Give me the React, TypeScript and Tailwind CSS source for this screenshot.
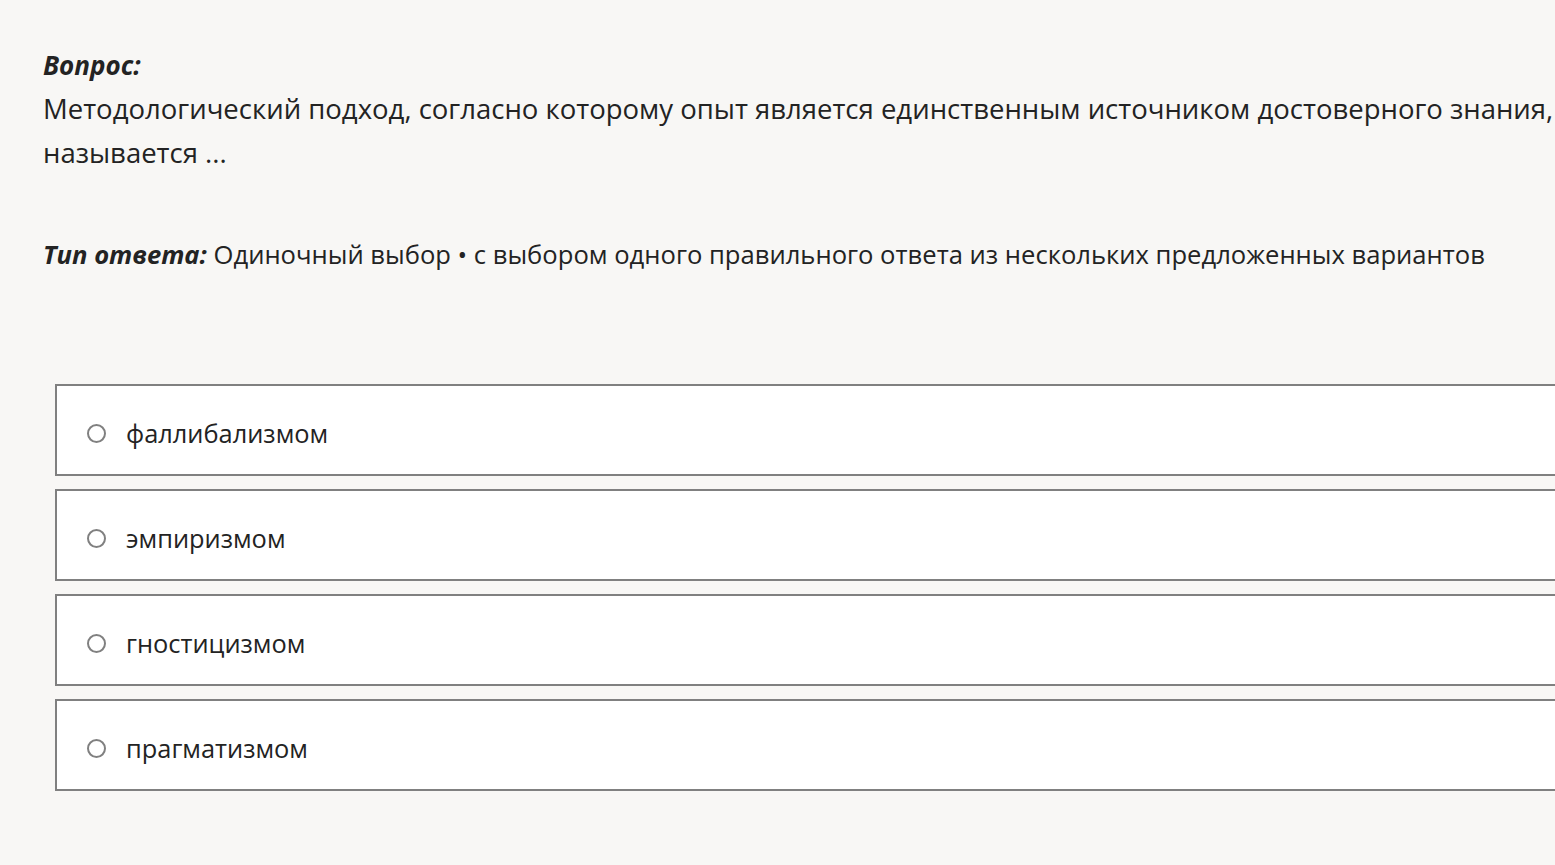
const options = ["фаллибализмом", "эмпиризмом", "гностицизмом", "прагматизмом"];

export default function App() {
  return (
    <div
      lang="ru"
      className="min-h-[865px] w-full overflow-hidden bg-[#f8f7f5] text-[#232323]"
      style={{ fontFamily: '"Open Sans", "Noto Sans", sans-serif' }}
    >
      <div className="w-[1700px] pl-[43px] pt-[43px]">
        {/* Question */}
        <div className="text-[27.5px] leading-[44px]">
          <div className="text-[26px] font-bold italic">Вопрос:</div>
          <div>
            Методологический подход, согласно которому опыт является единственным источником достоверного знания,
            <br />
            называется ...
          </div>
        </div>

        {/* Answer type */}
        <div className="mt-[58px] text-[25.6px] leading-[44px]">
          <span className="font-bold italic">Тип ответа:</span> Одиночный выбор • с выбором одного правильного ответа из
          нескольких предложенных вариантов
        </div>

        {/* Options */}
        <div className="mt-[107px] ml-[12px] flex flex-col gap-[13px]">
          {options.map((opt) => (
            <label
              key={opt}
              className="flex h-[92px] items-center gap-[20px] border-2 border-[#808080] bg-white pl-[30px] pt-[6px] text-[25.4px]"
            >
              <span className="mt-[1px] h-[19px] w-[19px] rounded-full border-2 border-[#808080] bg-white" />
              <span>{opt}</span>
            </label>
          ))}
        </div>
      </div>
    </div>
  );
}
